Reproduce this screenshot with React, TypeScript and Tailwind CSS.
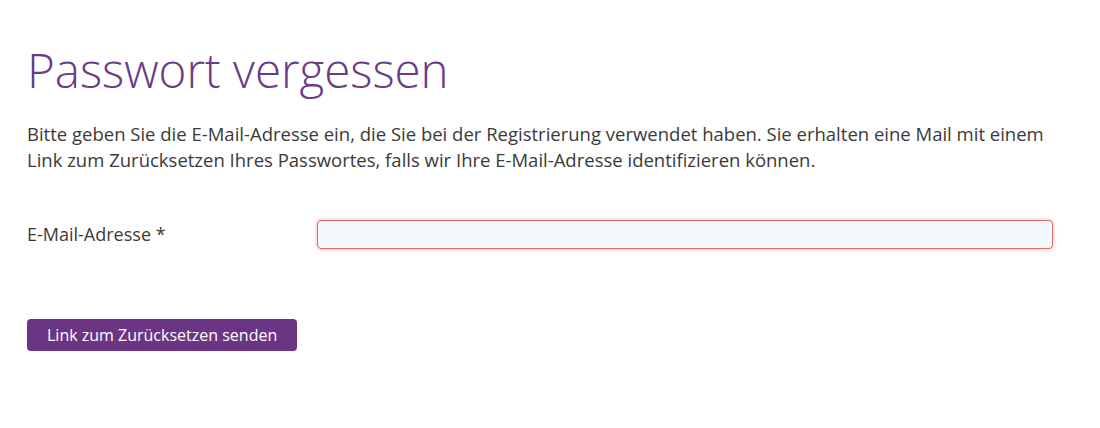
export default function App() {
  return (
    <div className="min-h-[428px] bg-white font-['Open_Sans',sans-serif] text-[#333]">
      <div className="pl-[27px] pr-[47px] pt-[38px]">
        <h1 className="text-[47.5px] font-light leading-[64px] text-[#6a3b86]">Passwort vergessen</h1>

        <p className="mt-[19px] text-[18.5px] leading-[26px] text-[#3a3a3a]">
          Bitte geben Sie die E-Mail-Adresse ein, die Sie bei der Registrierung verwendet haben. Sie erhalten eine Mail mit einem Link zum Zurücksetzen Ihres Passwortes, falls wir Ihre E-Mail-Adresse identifizieren können.
        </p>

        <div className="mt-[47px] flex items-center">
          <label className="w-[290px] shrink-0 text-[18px] text-[#3a3a3a]">E-Mail-Adresse *</label>
          <input
            type="email"
            className="h-[29px] flex-1 rounded-[4px] border border-[#e06a6a] bg-[#f3f8fd] px-2 shadow-[0_0_4px_rgba(230,100,100,0.45)] outline-none"
          />
        </div>

        <button className="mt-[70px] h-[32px] rounded-[4px] bg-[#6c3584] px-[20px] text-[16px] text-white">
          Link zum Zurücksetzen senden
        </button>
      </div>
    </div>
  )
}
